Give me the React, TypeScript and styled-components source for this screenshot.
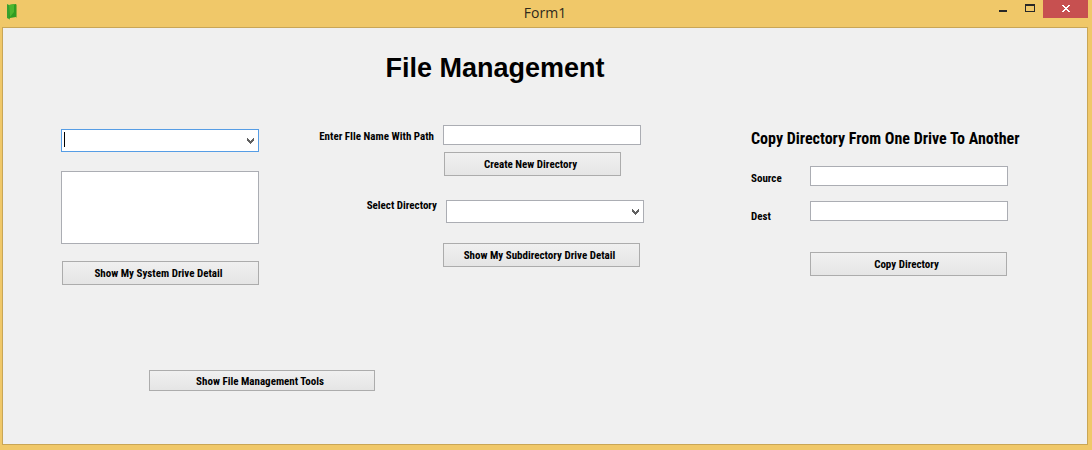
import React from "react";
import styled, { createGlobalStyle } from "styled-components";

const GlobalStyle = createGlobalStyle`
  * { box-sizing: border-box; }
  body {
    margin: 0;
    background: #f0c869;
    color: #000;
    font: bold 11px/16px "Roboto Condensed", "Arial Narrow", "Liberation Sans", sans-serif;
  }
  button, input, select { font: inherit; color: inherit; }
`;

const Window = styled.div`
  display: flex;
  flex-direction: column;
  min-height: 100vh;
  padding: 0 4px 5px 2px;
  background: #f0c869;
`;

const TitleBar = styled.header`
  display: grid;
  grid-template-columns: 1fr auto 1fr;
  height: 27px;
`;

const AppIcon = styled.svg`
  width: 14px;
  height: 18px;
  margin: 3px 0 0 3px;
`;

const WindowTitle = styled.span`
  padding-top: 3px;
  color: #2f2a1c;
  font: 14px/20px "Open Sans", "Noto Sans", sans-serif;
`;

const WindowControls = styled.div`
  display: flex;
  justify-content: flex-end;
`;

const WindowButton = styled.button<{ $width: number; $close?: boolean }>`
  display: flex;
  align-items: center;
  justify-content: center;
  width: ${(p) => p.$width}px;
  height: 18px;
  padding: 0;
  border: 0;
  background: ${(p) => (p.$close ? "#c75050" : "transparent")};
`;

const Client = styled.main`
  flex: 1;
  padding: 24px 0 32px 58px;
  border: 1px solid #c9a656;
  background: #f0f0f0;
`;

const Title = styled.h1`
  margin: 0;
  padding-right: 158px;
  text-align: center;
  font: bold 27px/32px "Liberation Sans", Arial, sans-serif;
`;

const Columns = styled.div`
  display: grid;
  grid-template-columns: 253fr 437fr 336fr;
  margin-top: 41px;
`;

const Column = styled.section<{ $top?: number }>`
  display: flex;
  flex-direction: column;
  align-items: flex-start;
  padding-top: ${(p) => p.$top ?? 0}px;
`;

const Field = styled.div<{ $labelWidth: number; $gap?: number; $top?: number }>`
  display: grid;
  grid-template-columns: ${(p) => p.$labelWidth}px 198px;
  column-gap: ${(p) => p.$gap ?? 0}px;
  margin-top: ${(p) => p.$top ?? 0}px;
`;

const Label = styled.label<{ $end?: boolean; $top?: number }>`
  padding-top: ${(p) => p.$top ?? 0}px;
  text-align: ${(p) => (p.$end ? "right" : "left")};
  white-space: nowrap;
`;

const TextBox = styled.input`
  width: 198px;
  height: 20px;
  padding: 0 4px;
  border: 1px solid #abadb3;
  border-radius: 0;
  background: #fff;
`;

const Combo = styled.div<{ $top?: number }>`
  position: relative;
  width: 198px;
  height: 23px;
  margin-top: ${(p) => p.$top ?? 0}px;
`;

const Select = styled.select<{ $active?: boolean }>`
  appearance: none;
  display: block;
  width: 100%;
  height: 100%;
  padding: 0 20px 0 4px;
  border: 1px solid ${(p) => (p.$active ? "#569de5" : "#abadb3")};
  border-radius: 0;
  background: #fff;
`;

const Chevron = styled.svg`
  position: absolute;
  top: 9px;
  right: 5px;
  width: 7px;
  height: 6px;
  pointer-events: none;
`;

const Caret = styled.span`
  position: absolute;
  top: 3px;
  left: 3px;
  width: 1px;
  height: 15px;
  background: #000;
`;

const ListBox = styled.select`
  width: 198px;
  height: 73px;
  margin: 19px 0 17px;
  border: 1px solid #abadb3;
  border-radius: 0;
  background: #fff;
`;

const Button = styled.button<{ $width?: number; $height?: number; $top?: number; $left?: number }>`
  width: ${(p) => p.$width ?? 197}px;
  height: ${(p) => p.$height ?? 24}px;
  margin: ${(p) => p.$top ?? 0}px 0 0 ${(p) => p.$left ?? 0}px;
  padding: 2px 4px 0 0;
  border: 1px solid #acacac;
  border-radius: 0;
  background: linear-gradient(#f0f0f0, #e5e5e5);
  white-space: nowrap;
`;

const Heading = styled.h2`
  margin: 0;
  font-size: 16px;
  line-height: 20px;
  white-space: nowrap;
`;

interface ComboBoxProps {
  id: string;
  label?: string;
  active?: boolean;
  top?: number;
}

function ComboBox({ id, label, active, top }: ComboBoxProps) {
  return (
    <Combo $top={top}>
      <Select id={id} aria-label={label} $active={active} />
      {active && <Caret />}
      <Chevron viewBox="0 0 7 6" aria-hidden="true" shapeRendering="crispEdges">
        <path d="M0 0h1v1h1v1h1v1h1v-1h1v-1h1v-1h1v3h-1v1h-1v1h-1v1h-1v-1h-1v-1h-1v-1h-1z" fill="#606060" />
      </Chevron>
    </Combo>
  );
}

export default function App() {
  return (
    <>
      <GlobalStyle />
      <Window>
        <TitleBar>
          <AppIcon viewBox="0 0 14 18" aria-hidden="true">
            <path d="M2 1l2 1v14l-2-1z" fill="#35a030" />
            <path d="M4 2l7-1v13l-6 1-1 2z" fill="#2f9c22" />
            <path d="M4 2l5-1v8l-4 5z" fill="#4cb62f" />
            <path d="M11 1l1 1v12l-1 1z" fill="#8fae3f" />
          </AppIcon>
          <WindowTitle>Form1</WindowTitle>
          <WindowControls>
            <WindowButton $width={27} aria-label="Minimize">
              <svg width="8" height="18" shapeRendering="crispEdges">
                <path d="M0 10h8v2h-8z" fill="#272727" />
              </svg>
            </WindowButton>
            <WindowButton $width={27} aria-label="Maximize">
              <svg width="10" height="18" shapeRendering="crispEdges">
                <path d="M0 4h10v8h-10zM1 6v5h8v-5z" fill="#272727" fillRule="evenodd" />
              </svg>
            </WindowButton>
            <WindowButton $width={45} $close aria-label="Close">
              <svg width="8" height="18" shapeRendering="crispEdges">
                <path
                  d="M0 5h2v1h1v1h2v-1h1v-1h2v1h-1v1h-1v1h-1v1h1v1h1v1h1v1h-2v-1h-1v-1h-2v1h-1v1h-2v-1h1v-1h1v-1h1v-1h-1v-1h-1v-1h-1z"
                  fill="#fff"
                />
              </svg>
            </WindowButton>
          </WindowControls>
        </TitleBar>
        <Client>
          <Title>File Management</Title>
          <Columns>
            <Column $top={4}>
              <ComboBox id="drive" label="Drive" active />
              <ListBox size={4} aria-label="Drive details" />
              <Button $left={1}>Show My System Drive Detail</Button>
            </Column>
            <Column>
              <Field $labelWidth={120} $gap={9}>
                <Label htmlFor="file-name" $end $top={4}>Enter FIle Name With Path</Label>
                <TextBox id="file-name" />
              </Field>
              <Button $width={177} $top={7} $left={130}>Create New Directory</Button>
              <Field $labelWidth={123} $gap={9} $top={21}>
                <Label htmlFor="directory" $end $top={1}>Select Directory</Label>
                <ComboBox id="directory" top={3} />
              </Field>
              <Button $top={20} $left={129}>Show My Subdirectory Drive Detail</Button>
            </Column>
            <Column $top={4}>
              <Heading>Copy Directory From One Drive To Another</Heading>
              <Field $labelWidth={59} $top={17}>
                <Label htmlFor="source" $top={5}>Source</Label>
                <TextBox id="source" />
              </Field>
              <Field $labelWidth={59} $top={14}>
                <Label htmlFor="dest" $top={8}>Dest</Label>
                <TextBox id="dest" />
              </Field>
              <Button $top={27} $left={59}>Copy Directory</Button>
            </Column>
          </Columns>
          <Button $width={226} $height={21} $top={85} $left={88}>Show File Management Tools</Button>
        </Client>
      </Window>
    </>
  );
}
